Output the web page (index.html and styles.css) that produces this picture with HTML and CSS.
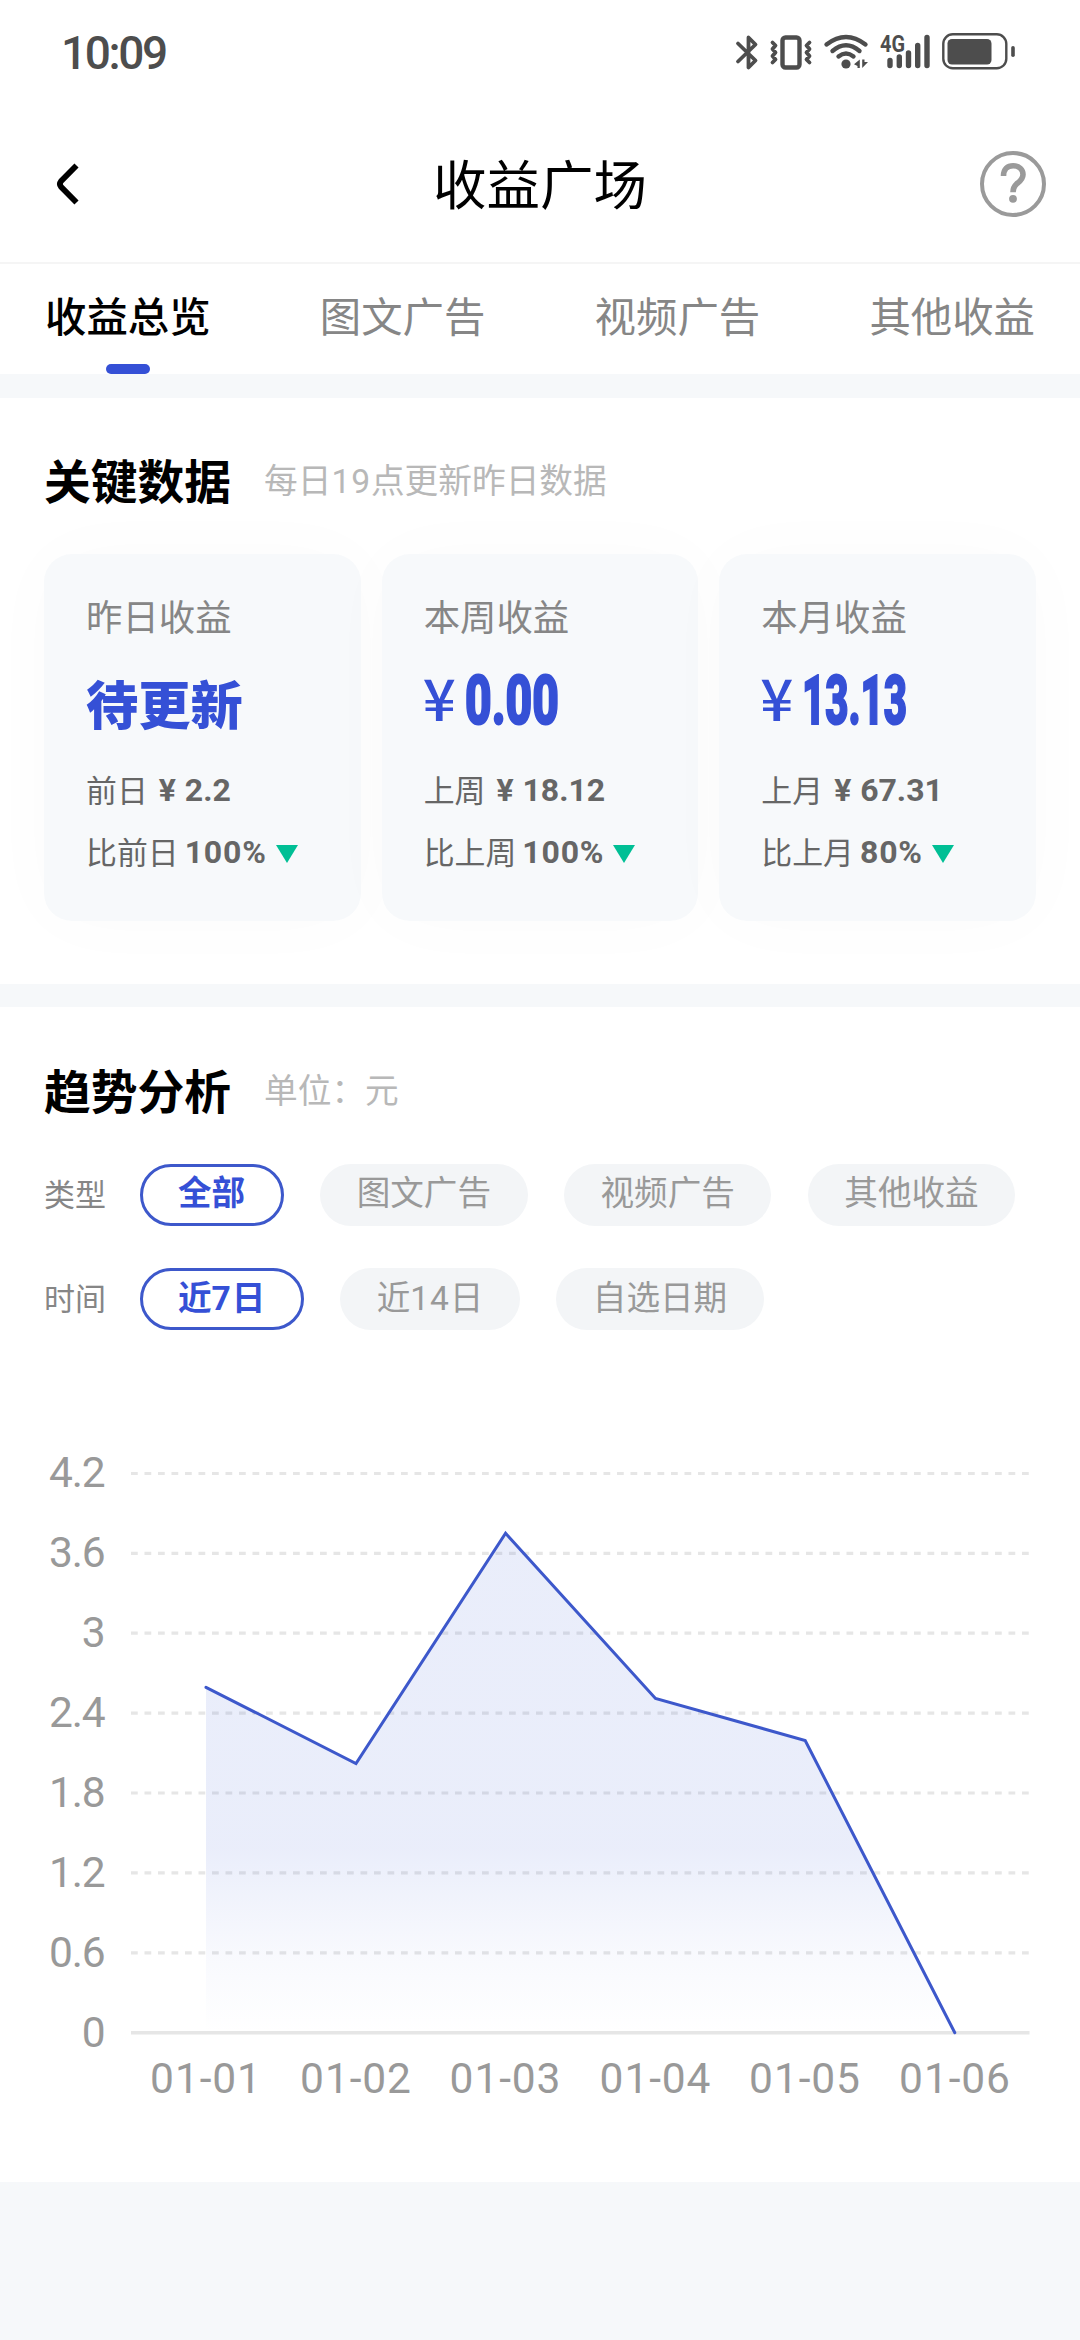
FILE: index.html
```html
<!DOCTYPE html>
<html lang="zh-CN">
<head>
<meta charset="utf-8">
<title>收益广场</title>
<link rel="stylesheet" href="styles.css">
</head>
<body>
<div class="status">
  <span class="clock">10:09</span>
  <svg class="status-icons" width="284" height="44" viewBox="734 30 284 44" fill="none" stroke="#4d4d4d" stroke-linecap="round" stroke-linejoin="round">
    <path stroke-width="3.8" d="M738 43.5 755.500 60.500 748.500 67.500V37.500L755.500 44.500 738 61.500"/>
    <rect x="782.500" y="37.500" width="17" height="30" rx="3" stroke-width="4.400"/>
    <path stroke-width="3.800" d="M772.500 42.500 775.500 45.500 772.500 49 775.500 52.500 772.500 56 775.500 59.500 772.500 62.500M809.500 42.500 806.500 45.500 809.500 49 806.500 52.500 809.500 56 806.500 59.500 809.500 62.500"/>
    <path stroke-width="4.400" d="M826.500 44.500Q846 29.500 865.500 44.500M832.500 51Q846 39.500 859.500 51M838.500 56.500Q846 50.500 853.500 56.500"/>
    <circle cx="846" cy="64" r="4.600" fill="#4d4d4d" stroke="none"/>
    <path d="M859.800 59.500V68H857.500V66L854 64.200ZM862.200 59.500V68L868 62H864.500V59.500Z" fill="#4d4d4d" stroke="none"/>
    <text class="net" x="880" y="51.500" textLength="25" lengthAdjust="spacingAndGlyphs">4G</text>
    <path stroke-width="5.400" d="M890 60.500V65.500M899.300 57V65.500M908.500 53V65.500M917.700 45.500V65.500M927 37.500V65.500"/>
    <rect x="943.300" y="34.300" width="63" height="34" rx="9.500" stroke-width="2.400"/>
    <rect x="947.500" y="39" width="44" height="25.500" rx="4.500" fill="#4d4d4d" stroke="none"/>
    <path stroke-width="3.600" d="M1013 47.800V55.200"/>
  </svg>
</div>

<header class="header">
  <svg class="back" width="24" height="44" viewBox="0 0 24 44" fill="none" stroke="#000" stroke-width="5.800"><path d="M20.500 3.500 5 19.200Q2.800 22 5 24.800L20.500 40.500"/></svg>
  <h1 class="title">收益广场</h1>
  <svg class="help" width="68" height="68" viewBox="0 0 68 68" fill="none" stroke="#9a9a9a"><circle cx="34" cy="34" r="31" stroke-width="4"/><path stroke-width="5.600" d="M24.500 26C24.500 19 28.500 15.800 34.200 15.800 40 15.800 44 19.500 44 24.500 44 29.500 40.500 31.500 37.500 34 34.800 36.500 34 38 34 42.200"/><circle cx="34" cy="48.800" r="3.900" fill="#9a9a9a" stroke="none"/></svg>
</header>

<nav class="tabs">
  <a class="tab tab-on">收益总览</a>
  <a class="tab">图文广告</a>
  <a class="tab">视频广告</a>
  <a class="tab">其他收益</a>
</nav>

<section class="panel key">
  <div class="head"><h2>关键数据</h2><span class="hint">每日<span class="d">19</span>点更新昨日数据</span></div>
  <div class="cards">
    <div class="card">
      <div class="label">昨日收益</div>
      <div class="value pending">待更新</div>
      <div class="row"><span>前日</span><b class="yen">¥</b><b>2.2</b></div>
      <div class="row"><span>比前日</span><b class="pct">100%</b><i class="down"></i></div>
    </div>
    <div class="card">
      <div class="label">本周收益</div>
      <div class="value"><span class="cur">¥</span><svg class="num" width="100" height="70"><text x="0" y="54" textLength="94" lengthAdjust="spacingAndGlyphs">0.00</text></svg></div>
      <div class="row"><span>上周</span><b class="yen">¥</b><b>18.12</b></div>
      <div class="row"><span>比上周</span><b class="pct">100%</b><i class="down"></i></div>
    </div>
    <div class="card">
      <div class="label">本月收益</div>
      <div class="value"><span class="cur">¥</span><svg class="num" width="110" height="70"><text x="0" y="54" textLength="105" lengthAdjust="spacingAndGlyphs">13.13</text></svg></div>
      <div class="row"><span>上月</span><b class="yen">¥</b><b>67.31</b></div>
      <div class="row"><span>比上月</span><b class="pct">80%</b><i class="down"></i></div>
    </div>
  </div>
</section>

<section class="panel trend">
  <div class="head"><h2>趋势分析</h2><span class="hint">单位：元</span></div>
  <div class="filter">
    <span class="name">类型</span>
    <span class="pill pill-on">全部</span><span class="pill">图文广告</span><span class="pill">视频广告</span><span class="pill">其他收益</span>
  </div>
  <div class="filter">
    <span class="name">时间</span>
    <span class="pill pill-on">近<span class="d">7</span>日</span><span class="pill">近<span class="d">14</span>日</span><span class="pill">自选日期</span>
  </div>
  <svg class="chart" width="1080" height="700" viewBox="0 1430 1080 700">
    <defs><linearGradient id="fade" gradientUnits="userSpaceOnUse" x1="0" y1="1533" x2="0" y2="2033">
      <stop offset="0" stop-color="#3558d6" stop-opacity=".105"/><stop offset=".63" stop-color="#3558d6" stop-opacity=".105"/><stop offset=".84" stop-color="#3558d6" stop-opacity=".035"/><stop offset="1" stop-color="#3558d6" stop-opacity="0"/>
    </linearGradient></defs>
    <path class="grid" d="M131 1473.500H1030M131 1553.300H1030M131 1633.200H1030M131 1713.100H1030M131 1793H1030M131 1872.900H1030M131 1952.800H1030"/>
    <path class="axis" d="M131 2032.700H1029.500"/>
    <path fill="url(#fade)" d="M206 1687.300 356 1763.500 505.600 1533.300 655.500 1698.400 805.200 1740.500 954.800 2032.700H206Z"/>
    <path class="line" d="M206 1687.300 356 1763.500 505.600 1533.300 655.500 1698.400 805.200 1740.500 954.800 2032.700"/>
    <g class="ylab">
      <text x="104.500" y="1487">4.2</text><text x="104.500" y="1567">3.6</text><text x="104.500" y="1647">3</text><text x="104.500" y="1727">2.4</text><text x="104.500" y="1807">1.8</text><text x="104.500" y="1886.500">1.2</text><text x="104.500" y="1966.500">0.6</text><text x="104.500" y="2046.500">0</text>
    </g>
    <g class="xlab">
      <text x="206" y="2092.500">01-01</text><text x="356" y="2092.500">01-02</text><text x="505.500" y="2092.500">01-03</text><text x="655.500" y="2092.500">01-04</text><text x="805" y="2092.500">01-05</text><text x="955" y="2092.500">01-06</text>
    </g>
  </svg>
</section>
</body>
</html>
```
FILE: styles.css
```css
* { box-sizing: border-box; }
body {
  margin: 0;
  width: 1080px;
  height: 2340px;
  overflow: hidden;
  background: #f6f8fa;
  font-family: "Noto Sans CJK SC", "Noto Sans", sans-serif;
  color: #000;
}
h1, h2 { margin: 0; }
svg { overflow: visible; flex: none; }
.d { font-family: Roboto, sans-serif; line-height: 1; letter-spacing: .8px; }

.status {
  height: 106px;
  display: flex;
  justify-content: space-between;
  padding: 30px 62px 0 61px;
  background: #fff;
}
.clock { font-family: Roboto, sans-serif; font-size: 46px; line-height: 47px; font-weight: 500; color: #4d4d4d; letter-spacing: -2.400px; }
.net { font-family: Roboto, sans-serif; font-size: 23.500px; font-weight: 700; fill: #4d4d4d; stroke: none; }

.header {
  height: 158px;
  display: flex;
  align-items: center;
  justify-content: space-between;
  padding: 0 33px 0 56px;
  background: #fff;
  border-bottom: 2px solid #f5f5f5;
}
.title { font-size: 53.500px; line-height: 70px; font-weight: 400; padding: 0 0 4px 21px; }

.tabs {
  height: 110px;
  display: flex;
  justify-content: space-between;
  padding: 0 45px;
  background: #fff;
}
.tab {
  display: flex;
  flex-direction: column;
  align-items: center;
  justify-content: space-between;
  padding-top: 20px;
  font-size: 41.400px;
  line-height: 60px;
  color: #868686;
}
.tab-on { color: #000; font-weight: 500; }
.tab-on::after { content: ""; width: 44px; height: 10px; border-radius: 5px; background: #3550d6; }

.panel { background: #fff; }
.key { height: 586px; margin-top: 24px; padding: 53px 44px 0; }
.trend { height: 1175px; margin-top: 23px; padding: 54px 0 0; }
.head { display: flex; align-items: center; gap: 33px; height: 56px; }
.trend .head { padding-left: 44px; }
h2 { font-size: 46.750px; line-height: 56px; font-weight: 700; }
.hint { font-size: 33.700px; line-height: 56px; color: #b8b8b8; }

.cards { display: grid; grid-template-columns: repeat(3, 1fr); gap: 21px; margin-top: 47px; }
.card {
  height: 367px;
  padding: 36px 0 0 42px;
  border-radius: 28px;
  background: #f7f9fb;
  box-shadow: 0 0 80px rgba(0, 80, 50, .018);
}
.label { font-size: 36.400px; line-height: 50px; color: #868686; }
.value { display: flex; height: 118px; color: #3550d6; }
.pending { font-size: 52.250px; line-height: 60px; font-weight: 900; padding-top: 32px; }
.cur { width: 42px; font-size: 58px; line-height: 60px; font-weight: 500; padding-top: 26px; margin-left: -1px; }
.num { margin-top: 30px; font-family: Roboto, sans-serif; font-size: 69px; font-weight: 900; fill: #3550d6; stroke: #3550d6; stroke-width: 2px; }
.row { display: flex; align-items: center; height: 62px; font-size: 30.900px; line-height: 62px; color: #666; }
.row b { font-family: Roboto, sans-serif; font-weight: 700; font-size: 32px; padding-top: 2px; }
.row .yen { width: 26px; margin-left: 11px; }
.row .pct { margin-left: 6px; letter-spacing: .800px; }
.down { margin: 6px 0 0 9px; border: 11px solid transparent; border-top: 18px solid #00bf95; border-bottom: 0; }

.filter { display: flex; align-items: center; height: 62px; padding-left: 44px; gap: 36.500px; }
.head + .filter { margin-top: 47px; }
.filter + .filter { margin-top: 42px; }
.name { flex: none; width: 59px; font-size: 31px; line-height: 62px; padding-bottom: 4px; color: #868686; white-space: nowrap; }
.pill {
  height: 62px;
  padding: 0 36.500px;
  border-radius: 31px;
  background: #f3f5f7;
  font-size: 33.600px;
  line-height: 54px;
  color: #999;
  white-space: nowrap;
}
.pill-on { padding: 0 35.500px; border: 3px solid #3d58cb; background: #fff; color: #3550d6; font-weight: 700; line-height: 48px; }
.filter + .filter .pill { line-height: 56px; }
.filter + .filter .pill-on { line-height: 50px; }

.chart { display: block; margin-top: 100px; }
.grid { stroke: #e6e6e6; stroke-width: 3.200; stroke-dasharray: 6.750 6.750; }
.axis { stroke: #e6e6e6; stroke-width: 3.500; }
.line { fill: none; stroke: #3d58cb; stroke-width: 3; stroke-linecap: round; }
.ylab, .xlab { font-family: Roboto, sans-serif; font-size: 42.500px; fill: #999; }
.ylab { text-anchor: end; letter-spacing: -1.200px; }
.xlab { text-anchor: middle; letter-spacing: .9px; }
```
